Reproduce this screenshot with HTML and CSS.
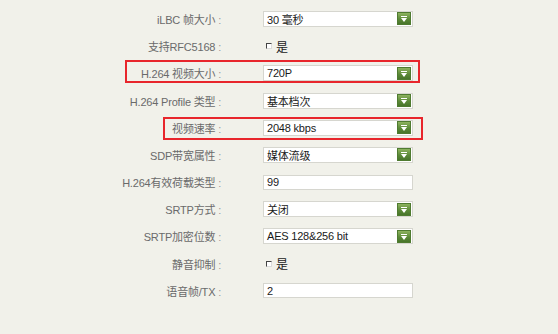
FILE: index.html
```html
<!DOCTYPE html>
<html lang="zh">
<head>
<meta charset="utf-8">
<title>视频设置</title>
<link rel="stylesheet" href="styles.css">
</head>
<body>
<div class="form">
  <div class="row">
    <span class="lbl">iLBC 帧大小 <span class="colon">:</span></span>
    <div class="select"><span class="val">30 毫秒</span><i class="btn"></i></div>
  </div>
  <div class="row">
    <span class="lbl">支持RFC5168 <span class="colon">:</span></span>
    <div class="check"><i class="box"></i><span class="val">是</span></div>
  </div>
  <div class="row">
    <span class="mark mark-a"></span>
    <span class="lbl">H.264 视频大小 <span class="colon">:</span></span>
    <div class="select"><span class="val">720P</span><i class="btn"></i></div>
  </div>
  <div class="row">
    <span class="lbl">H.264 Profile 类型 <span class="colon">:</span></span>
    <div class="select"><span class="val">基本档次</span><i class="btn"></i></div>
  </div>
  <div class="row">
    <span class="mark mark-b"></span>
    <span class="lbl">视频速率 <span class="colon">:</span></span>
    <div class="select"><span class="val">2048 kbps</span><i class="btn"></i></div>
  </div>
  <div class="row">
    <span class="lbl">SDP带宽属性 <span class="colon">:</span></span>
    <div class="select"><span class="val">媒体流级</span><i class="btn"></i></div>
  </div>
  <div class="row">
    <span class="lbl">H.264有效荷载类型 <span class="colon">:</span></span>
    <div class="input"><span class="val">99</span></div>
  </div>
  <div class="row">
    <span class="lbl">SRTP方式 <span class="colon">:</span></span>
    <div class="select"><span class="val">关闭</span><i class="btn"></i></div>
  </div>
  <div class="row">
    <span class="lbl">SRTP加密位数 <span class="colon">:</span></span>
    <div class="select"><span class="val">AES 128&amp;256 bit</span><i class="btn"></i></div>
  </div>
  <div class="row">
    <span class="lbl">静音抑制 <span class="colon">:</span></span>
    <div class="check"><i class="box"></i><span class="val">是</span></div>
  </div>
  <div class="row">
    <span class="lbl">语音帧/TX <span class="colon">:</span></span>
    <div class="input"><span class="val">2</span></div>
  </div>
</div>
</body>
</html>
```
FILE: styles.css
```css
html, body {
  margin: 0;
  padding: 0;
  background: #f1f1ea;
}
body {
  width: 558px;
  height: 334px;
  overflow: hidden;
  font-family: "Liberation Sans", "Noto Sans CJK SC", sans-serif;
  font-size: 11px;
}
.form {
  padding-top: 5.4px;
}
.row {
  position: relative;
  display: grid;
  grid-template-columns: 221px 150px;
  column-gap: 42px;
  align-items: center;
  height: 27.2px;
}
.lbl {
  text-align: right;
  color: #6a6a6a;
  white-space: nowrap;
  letter-spacing: -0.2px;
}
.colon {
  color: #9a9a9a;
}
.val {
  color: #1a1a1a;
  white-space: nowrap;
  letter-spacing: -0.2px;
}
.select, .input {
  box-sizing: border-box;
  width: 150px;
  height: 16px;
  background: #fff;
  border: 1px solid #d6d6cf;
  display: flex;
  align-items: center;
  justify-content: space-between;
  padding-left: 3px;
}
.input {
  height: 15px;
}
.btn {
  box-sizing: border-box;
  width: 14px;
  height: 13px;
  margin-right: 1px;
  background: linear-gradient(#8db35f, #5c8a38 55%, #48752a);
  border: 1px solid #4f7b30;
  position: relative;
}
.btn::before {
  content: "";
  position: absolute;
  left: 3px;
  top: 3px;
  width: 6px;
  height: 1px;
  background: #fff;
}
.btn::after {
  content: "";
  position: absolute;
  left: 3px;
  top: 5px;
  border-left: 3px solid transparent;
  border-right: 3px solid transparent;
  border-top: 4px solid #fff;
}
.check {
  display: flex;
  align-items: center;
  gap: 4px;
  padding-left: 3px;
}
.box {
  box-sizing: border-box;
  width: 6px;
  height: 6px;
  border-top: 1.5px solid #444;
  border-left: 1.5px solid #444;
  border-right: 1px solid #dcdcdc;
  border-bottom: 1px solid #dcdcdc;
  background: #fff;
}
.check .val {
  font-size: 12px;
}
.mark {
  position: absolute;
  box-sizing: border-box;
  border: 2px solid #e8262c;
  height: 23px;
  pointer-events: none;
}
.mark-a {
  left: 125px;
  width: 295px;
  top: 0;
}
.mark-b {
  left: 163px;
  width: 260px;
  top: 3px;
}
```
